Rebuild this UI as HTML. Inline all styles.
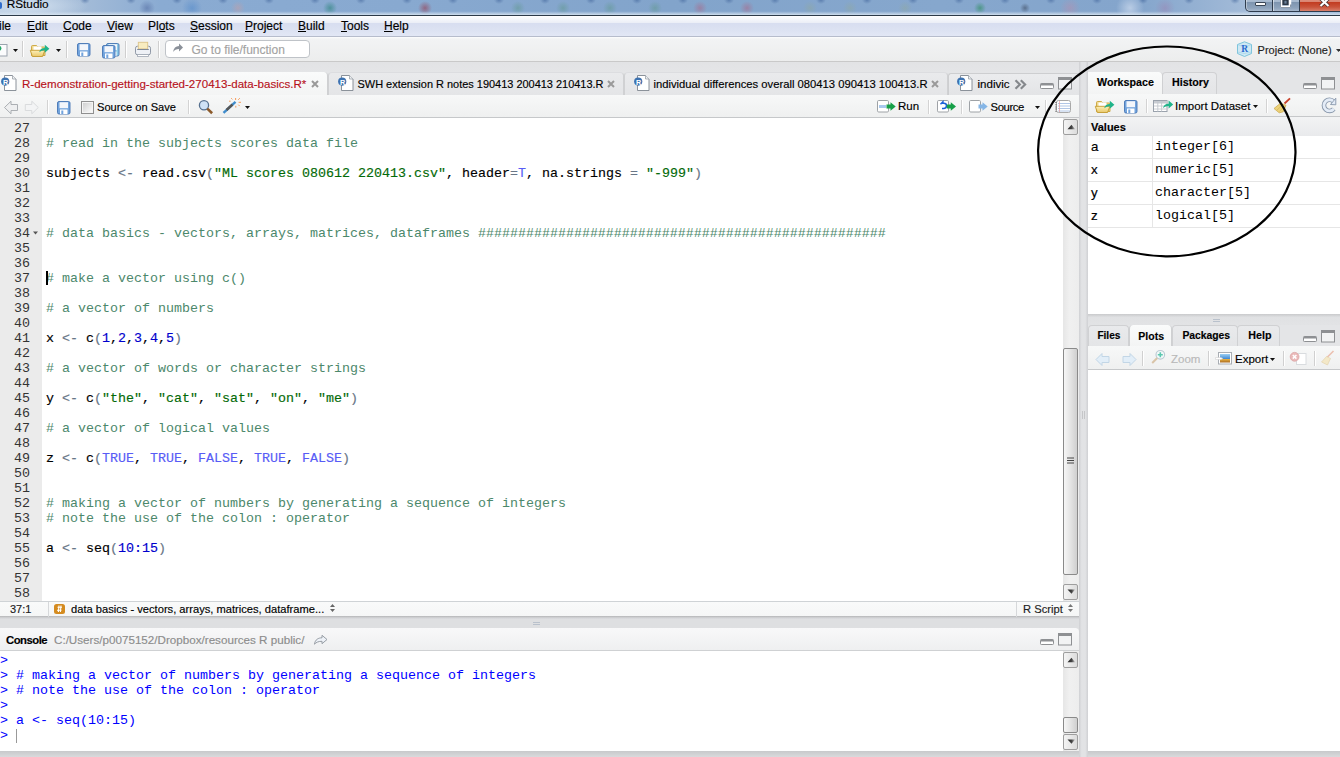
<!DOCTYPE html><html><head><meta charset="utf-8"><style>
*{margin:0;padding:0;box-sizing:border-box}
html,body{width:1340px;height:757px;overflow:hidden;background:#dedfe1;font-family:"Liberation Sans",sans-serif;font-size:12px;color:#000;position:relative}
.a{position:absolute}
.t{position:absolute;white-space:pre;-webkit-text-stroke:0.15px currentColor}
.u{text-decoration:underline;text-underline-offset:1px}
.code{position:absolute;font-family:"Liberation Mono",monospace;font-size:13.333px;line-height:15px;white-space:pre}
.cm{color:#4c886b;-webkit-text-stroke:0}.st{color:#036a07}.nu{color:#0000cd}.op{color:#687687}.la{color:#585cf6}
svg{position:absolute;overflow:visible}
</style></head><body>
<div class="a" style="left:0px;top:0px;width:1340px;height:15px;background:linear-gradient(rgba(255,255,255,0) 75%,rgba(215,228,240,.9) 100%),radial-gradient(ellipse 60px 14px at 28px 6px,rgba(215,228,242,.9),rgba(225,235,245,0)),radial-gradient(circle 8px at 147px 8px,rgba(80,105,160,.55),rgba(0,0,0,0)),radial-gradient(circle 10px at 192px 8px,rgba(70,130,200,.45),rgba(0,0,0,0)),radial-gradient(circle 7px at 238px 8px,rgba(190,160,170,.6),rgba(0,0,0,0)),radial-gradient(circle 7px at 330px 8px,rgba(40,130,120,.6),rgba(0,0,0,0)),radial-gradient(circle 7px at 425px 8px,rgba(150,60,80,.6),rgba(0,0,0,0)),radial-gradient(circle 7px at 518px 8px,rgba(90,150,130,.45),rgba(0,0,0,0)),radial-gradient(circle 7px at 563px 8px,rgba(90,150,130,.45),rgba(0,0,0,0)),radial-gradient(circle 7px at 610px 8px,rgba(90,150,130,.45),rgba(0,0,0,0)),radial-gradient(circle 7px at 655px 8px,rgba(90,150,130,.45),rgba(0,0,0,0)),radial-gradient(circle 7px at 700px 8px,rgba(180,90,120,.45),rgba(0,0,0,0)),radial-gradient(circle 7px at 747px 8px,rgba(180,90,120,.45),rgba(0,0,0,0)),radial-gradient(circle 7px at 810px 8px,rgba(150,170,140,.35),rgba(0,0,0,0)),radial-gradient(circle 7px at 850px 8px,rgba(150,170,140,.35),rgba(0,0,0,0)),radial-gradient(circle 7px at 905px 8px,rgba(150,170,140,.35),rgba(0,0,0,0)),radial-gradient(circle 6px at 980px 8px,rgba(40,140,90,.6),rgba(0,0,0,0)),radial-gradient(circle 5px at 1025px 8px,rgba(50,60,80,.5),rgba(0,0,0,0)),radial-gradient(circle 10px at 1070px 8px,rgba(190,140,170,.45),rgba(0,0,0,0)),radial-gradient(circle 14px at 1130px 8px,rgba(220,230,245,.6),rgba(0,0,0,0)),radial-gradient(circle 10px at 1165px 8px,rgba(160,120,170,.4),rgba(0,0,0,0)),radial-gradient(ellipse 5px 4px at 23px 0px,rgba(60,95,150,.55),rgba(60,95,150,0)) 108px 0/46px 15px repeat-x,linear-gradient(90deg,#b4c8de 0%,#a4bcd8 6%,#8aabd2 12%,#88a9d0 30%,#82a4cb 50%,#86a7cd 70%,#84a5cc 85%,#a3bbd8 93%,#94b0d2 100%)"></div>
<div class="a" style="left:0px;top:15px;width:1340px;height:1px;background:#2c3a48"></div>
<div class="t" style="left:6.7px;top:-1.19px;font-size:11.8px;line-height:11.8px;color:#000;">RStudio</div>
<div class="a" style="left:-3px;top:2px;width:4.5px;height:7px;background:#2f6ccc;border-radius:2px"></div>
<div class="a" style="left:1245px;top:-3px;width:28px;height:14.5px;background:linear-gradient(#b3c3d6 0px,#a5b8ce 5px,#7e95b0 5.5px,#8ea3bc 11px,#a7b8cc 14px);border:1px solid #2f3d4e;border-top:none;border-radius:0 0 0 5px;box-shadow:inset 1px 0 0 rgba(255,255,255,.4)"></div>
<div class="a" style="left:1273px;top:-3px;width:27px;height:14.5px;background:linear-gradient(#b3c3d6 0px,#a5b8ce 5px,#7e95b0 5.5px,#8ea3bc 11px,#a7b8cc 14px);border:1px solid #2f3d4e;border-top:none;border-left:none;box-shadow:inset 1px 0 0 rgba(255,255,255,.5)"></div>
<div class="a" style="left:1300px;top:-3px;width:42px;height:14.5px;background:linear-gradient(#e39a88 0px,#d98471 5px,#c23d22 5.5px,#c9533a 10px,#d8806b 14px);border:1px solid #2f3d4e;border-top:none;border-left:none"></div>
<div class="a" style="left:1254.5px;top:2.4px;width:11px;height:4px;background:#fbfbfb;border:1px solid #3a4656;border-radius:1px"></div>
<svg style="left:0;top:0" width="1340" height="757"><path d="M1283.5 -2 V3.5 h4 V-2" fill="none" stroke="#2e3a48" stroke-width="3.2"/><path d="M1281 -2 V7 h9 V-2" fill="none" stroke="#2e3a48" stroke-width="1"/><rect x="1281.5" y="-2" width="8" height="8.5" fill="none" stroke="#fff" stroke-width="1.6"/><rect x="1284" y="0.5" width="3" height="3.5" fill="#6a7f98" stroke="#2e3a48" stroke-width="0.8"/><path d="M1290.5 -1 V4.5" stroke="#fff" stroke-width="1.5"/><path d="M1320.5 -1.5 L1328.5 6 M1328.5 -1.5 L1320.5 6" stroke="#3a2a2a" stroke-width="3.6"/><path d="M1320.5 -1.5 L1328.5 6 M1328.5 -1.5 L1320.5 6" stroke="#fff" stroke-width="2.2"/></svg>
<div class="a" style="left:0px;top:16px;width:1340px;height:20px;background:linear-gradient(#ffffff 0px,#f5f7fb 3px,#eceff7 6.5px,#d8def0 7.5px,#dce2f2 14px,#e2e7f5 20px)"></div>
<div class="a" style="left:0px;top:36px;width:1340px;height:1px;background:#b6bccc"></div>
<div class="t" style="left:-1px;top:19.84px;font-size:12px;line-height:12px;color:#000;">ile</div>
<div class="t" style="left:27px;top:19.84px;font-size:12px;line-height:12px;color:#000;"><span class="u">E</span>dit</div>
<div class="t" style="left:63px;top:19.84px;font-size:12px;line-height:12px;color:#000;"><span class="u">C</span>ode</div>
<div class="t" style="left:107px;top:19.84px;font-size:12px;line-height:12px;color:#000;"><span class="u">V</span>iew</div>
<div class="t" style="left:148px;top:19.84px;font-size:12px;line-height:12px;color:#000;">Pl<span class="u">o</span>ts</div>
<div class="t" style="left:190px;top:19.84px;font-size:12px;line-height:12px;color:#000;"><span class="u">S</span>ession</div>
<div class="t" style="left:245px;top:19.84px;font-size:12px;line-height:12px;color:#000;"><span class="u">P</span>roject</div>
<div class="t" style="left:298px;top:19.84px;font-size:12px;line-height:12px;color:#000;"><span class="u">B</span>uild</div>
<div class="t" style="left:341px;top:19.84px;font-size:12px;line-height:12px;color:#000;"><span class="u">T</span>ools</div>
<div class="t" style="left:384px;top:19.84px;font-size:12px;line-height:12px;color:#000;"><span class="u">H</span>elp</div>
<div class="a" style="left:0px;top:37px;width:1340px;height:24px;background:linear-gradient(#fdfdfd 0px,#f2f3f4 2px,#eceded 24px)"></div>
<div class="a" style="left:0px;top:61px;width:1340px;height:1px;background:#c9c9c9"></div>
<div class="a" style="left:0px;top:62px;width:1340px;height:10px;background:linear-gradient(#e2e3e5,#e4e5e7)"></div>
<div class="a" style="left:165px;top:40px;width:145px;height:18px;background:#fff;border:1px solid #bfc3c8;border-radius:4px"></div>
<div class="t" style="left:191.5px;top:43.84px;font-size:12px;line-height:12px;color:#a3a3a3;">Go to file/function</div>
<div class="t" style="left:1257.6px;top:44.69px;font-size:11px;line-height:11px;color:#222;">Project: (None)</div>
<div class="a" style="left:0px;top:72px;width:1079px;height:23px;background:#e4e5e7"></div>
<div class="a" style="left:328px;top:72px;width:296px;height:23px;background:linear-gradient(#e9eaec,#e4e5e7);border-left:1px solid #d0d1d3;border-right:1px solid #d0d1d3;border-top:1px solid #dcdde0;border-top-left-radius:4px;border-top-right-radius:4px"></div>
<div class="a" style="left:624px;top:72px;width:324px;height:23px;background:linear-gradient(#e9eaec,#e4e5e7);border-left:1px solid #d0d1d3;border-right:1px solid #d0d1d3;border-top:1px solid #dcdde0;border-top-left-radius:4px;border-top-right-radius:4px"></div>
<div class="a" style="left:948px;top:73px;width:131px;height:22px;background:linear-gradient(#ebecee,#e3e4e6);border-left:1px solid #cdced0;border-top:1px solid #cdced0;border-top-left-radius:3px"></div>
<div class="a" style="left:0px;top:72px;width:328px;height:24px;background:linear-gradient(#fafbfb,#f3f4f4);border-right:1px solid #cfd0d2;border-top-right-radius:4px"></div>
<div class="t" style="left:22px;top:78.52px;font-size:11.55px;line-height:11.55px;color:#b7121c;">R-demonstration-getting-started-270413-data-basics.R*</div>
<div class="t" style="left:357.5px;top:79.02px;font-size:10.96px;line-height:10.96px;color:#000;">SWH extension R notes 190413 200413 210413.R</div>
<div class="t" style="left:653.5px;top:78.79px;font-size:11.24px;line-height:11.24px;color:#000;">individual differences overall 080413 090413 100413.R</div>
<div class="t" style="left:977.5px;top:78.52px;font-size:11.55px;line-height:11.55px;color:#000;">indivic</div>
<div class="a" style="left:0px;top:95px;width:1079px;height:22px;background:linear-gradient(#f7f8f8,#eff0f0)"></div>
<div class="a" style="left:0px;top:117px;width:1079px;height:1px;background:#c6c8ca"></div>
<div class="t" style="left:97px;top:101.60px;font-size:11.1px;line-height:11.1px;color:#000;">Source on Save</div>
<div class="t" style="left:898px;top:101.47px;font-size:11.5px;line-height:11.5px;color:#000;">Run</div>
<div class="t" style="left:990.5px;top:101.63px;font-size:11.3px;line-height:11.3px;color:#000;letter-spacing:-0.38px">Source</div>
<div class="a" style="left:0px;top:118px;width:1063px;height:483px;background:#fff"></div>
<div class="a" style="left:0px;top:118px;width:42px;height:483px;background:#ebebeb"></div>
<div class="a" style="left:1063px;top:118px;width:16px;height:483px;background:linear-gradient(90deg,#e6e6e6,#f0f0f0 40%,#ededed)"></div>
<div class="a" style="left:1063px;top:119px;width:15px;height:16px;background:linear-gradient(90deg,#f4f4f4,#dcdcdc);border:1px solid #9e9e9e;border-radius:2px"></div>
<div class="a" style="left:1063px;top:348px;width:15px;height:227px;background:linear-gradient(90deg,#f6f6f6,#e4e4e4 50%,#cfcfcf);border:1px solid #8a8a8a;border-radius:2px"></div>
<div class="a" style="left:1063px;top:584px;width:15px;height:16px;background:linear-gradient(90deg,#f4f4f4,#dcdcdc);border:1px solid #9e9e9e;border-radius:2px"></div>
<svg style="left:0;top:0" width="1340" height="757"><defs><linearGradient id="arr" x1="0" y1="0" x2="1" y2="0"><stop offset="0" stop-color="#222"/><stop offset="0.55" stop-color="#444"/><stop offset="1" stop-color="#c8c8c8"/></linearGradient></defs><path d="M1067.5 129.2 L1071.5 124.8 L1075.2 129.2 Z" fill="url(#arr)"/><path d="M1067.5 589.5 L1071.5 593.8 L1075.2 589.5 Z" fill="url(#arr)"/><path d="M1067 458h7M1067 460.5h7M1067 463h7" stroke="#444" stroke-width="1"/></svg>
<div class="code" style="left:0;top:121px;width:30px;text-align:right;color:#333">27
28
29
30
31
32
33
34
35
36
37
38
39
40
41
42
43
44
45
46
47
48
49
50
51
52
53
54
55
56
57
58</div>
<div class="code" style="left:46px;top:121px;-webkit-text-stroke:0.15px currentColor">
<span class="cm"># read in the subjects scores data file</span>

subjects <span class="op">&lt;-</span> read.csv<span class="op">(</span><span class="st">"ML scores 080612 220413.csv"</span>, header<span class="op">=</span><span class="la">T</span>, na.strings <span class="op">=</span> <span class="st">"-999"</span><span class="op">)</span>



<span class="cm"># data basics - vectors, arrays, matrices, dataframes ###################################################</span>


<span class="cm"># make a vector using c()</span>

<span class="cm"># a vector of numbers</span>

x <span class="op">&lt;-</span> c<span class="op">(</span><span class="nu">1</span>,<span class="nu">2</span>,<span class="nu">3</span>,<span class="nu">4</span>,<span class="nu">5</span><span class="op">)</span>

<span class="cm"># a vector of words or character strings</span>

y <span class="op">&lt;-</span> c<span class="op">(</span><span class="st">"the"</span>, <span class="st">"cat"</span>, <span class="st">"sat"</span>, <span class="st">"on"</span>, <span class="st">"me"</span><span class="op">)</span>

<span class="cm"># a vector of logical values</span>

z <span class="op">&lt;-</span> c<span class="op">(</span><span class="la">TRUE</span>, <span class="la">TRUE</span>, <span class="la">FALSE</span>, <span class="la">TRUE</span>, <span class="la">FALSE</span><span class="op">)</span>


<span class="cm"># making a vector of numbers by generating a sequence of integers</span>
<span class="cm"># note the use of the colon : operator</span>

a <span class="op">&lt;-</span> seq<span class="op">(</span><span class="nu">10:15</span><span class="op">)</span>
</div>
<div class="a" style="left:46px;top:271px;width:2px;height:14px;background:#000"></div>
<svg style="left:0;top:0" width="1340" height="757"><path d="M33 231.5 L38 231.5 L35.5 234.5 Z" fill="#555"/></svg>
<div class="a" style="left:0px;top:601px;width:1079px;height:16px;background:linear-gradient(#f9fafa,#f5f6f6);border-top:1px solid #cfd3d6"></div>
<div class="a" style="left:0px;top:616px;width:1079px;height:3px;background:linear-gradient(#b4b5b7,#d2d3d5 60%,#dcdde0)"></div>
<div class="a" style="left:48px;top:602px;width:1px;height:15px;background:#d6d8da"></div>
<div class="a" style="left:1016px;top:602px;width:1px;height:15px;background:#d6d8da"></div>
<div class="t" style="left:10px;top:603.89px;font-size:11px;line-height:11px;color:#222;">37:1</div>
<div class="t" style="left:71px;top:603.76px;font-size:11.15px;line-height:11.15px;color:#000;">data basics - vectors, arrays, matrices, dataframe...</div>
<div class="t" style="left:1023px;top:603.72px;font-size:11.2px;line-height:11.2px;color:#222;">R Script</div>
<div class="a" style="left:0px;top:628px;width:1079px;height:23px;background:linear-gradient(#f8f8f9,#eeeff0);border-top-right-radius:4px"></div>
<div class="a" style="left:0px;top:650px;width:1079px;height:1px;background:#cfd1d3"></div>
<div class="a" style="left:0px;top:651px;width:1079px;height:100px;background:#fff"></div>
<div class="a" style="left:0px;top:751px;width:1079px;height:6px;background:linear-gradient(#c8c9cb,#d9dadc)"></div>
<div class="t" style="left:6px;top:634.73px;font-size:11.3px;line-height:11.3px;color:#000;font-weight:bold;letter-spacing:-0.5px">Console</div>
<div class="t" style="left:54px;top:634.14px;font-size:11.65px;line-height:11.65px;color:#8c8c8c;">C:/Users/p0075152/Dropbox/resources R public/</div>
<div class="code" style="left:0;top:653px;color:#0000ff">&gt;
&gt; # making a vector of numbers by generating a sequence of integers
&gt; # note the use of the colon : operator
&gt;
&gt; a &lt;- seq(10:15)
&gt; </div>
<div class="a" style="left:16px;top:729px;width:1px;height:14px;background:#999"></div>
<div class="a" style="left:1063px;top:651px;width:16px;height:100px;background:linear-gradient(90deg,#e6e6e6,#f0f0f0 40%,#ededed)"></div>
<div class="a" style="left:1063px;top:652px;width:15px;height:16px;background:linear-gradient(90deg,#f4f4f4,#dcdcdc);border:1px solid #9e9e9e;border-radius:2px"></div>
<div class="a" style="left:1063px;top:717px;width:15px;height:16px;background:linear-gradient(90deg,#f6f6f6,#e4e4e4 50%,#cfcfcf);border:1px solid #8a8a8a;border-radius:2px"></div>
<div class="a" style="left:1063px;top:734px;width:15px;height:16px;background:linear-gradient(90deg,#f4f4f4,#dcdcdc);border:1px solid #9e9e9e;border-radius:2px"></div>
<svg style="left:0;top:0" width="1340" height="757"><path d="M1067.5 662.2 L1071.5 657.8 L1075.2 662.2 Z" fill="url(#arr)"/><path d="M1067.5 739.5 L1071.5 743.8 L1075.2 739.5 Z" fill="url(#arr)"/></svg>
<div class="a" style="left:1079px;top:62px;width:9px;height:695px;background:linear-gradient(90deg,#cfd0d3,#e2e3e5 30%,#e2e3e5 70%,#cfd0d3)"></div>
<div class="a" style="left:1088px;top:72px;width:252px;height:23px;background:#e4e5e7"></div>
<div class="a" style="left:1162px;top:72px;width:55px;height:22px;background:linear-gradient(#e9eaec,#e4e5e7);border:1px solid #d0d1d3;border-bottom:none;border-radius:4px 4px 0 0"></div>
<div class="a" style="left:1088px;top:72px;width:75px;height:23px;background:linear-gradient(#fafbfb,#f3f4f4);border-right:1px solid #cfd0d2;border-top-right-radius:4px"></div>
<div class="t" style="left:1097px;top:77.44px;font-size:10.7px;line-height:10.7px;color:#000;font-weight:bold;">Workspace</div>
<div class="t" style="left:1172px;top:77.44px;font-size:10.7px;line-height:10.7px;color:#000;font-weight:bold;">History</div>
<div class="a" style="left:1088px;top:94px;width:252px;height:23px;background:linear-gradient(#f7f8f8,#eff0f0)"></div>
<div class="a" style="left:1088px;top:116px;width:252px;height:1px;background:#c6c8ca"></div>
<div class="t" style="left:1175px;top:100.77px;font-size:11.5px;line-height:11.5px;color:#000;">Import Dataset</div>
<div class="a" style="left:1088px;top:117px;width:252px;height:197px;background:#fff"></div>
<div class="a" style="left:1088px;top:117px;width:252px;height:19px;background:linear-gradient(#f2f3f4,#e9eaec)"></div>
<div class="t" style="left:1091px;top:122.19px;font-size:11px;line-height:11px;color:#000;font-weight:bold;">Values</div>
<div class="a" style="left:1088px;top:158px;width:252px;height:1px;background:#e6e6e6"></div>
<div class="t" style="left:1091px;top:139.74px;font-size:13.3px;line-height:13.3px;color:#000;">a</div>
<div class="code" style="left:1155px;top:139px;color:#000">integer[6]</div>
<div class="a" style="left:1088px;top:181px;width:252px;height:1px;background:#e6e6e6"></div>
<div class="t" style="left:1091px;top:162.74px;font-size:13.3px;line-height:13.3px;color:#000;">x</div>
<div class="code" style="left:1155px;top:162px;color:#000">numeric[5]</div>
<div class="a" style="left:1088px;top:204px;width:252px;height:1px;background:#e6e6e6"></div>
<div class="t" style="left:1091px;top:185.74px;font-size:13.3px;line-height:13.3px;color:#000;">y</div>
<div class="code" style="left:1155px;top:185px;color:#000">character[5]</div>
<div class="a" style="left:1088px;top:227px;width:252px;height:1px;background:#e6e6e6"></div>
<div class="t" style="left:1091px;top:208.74px;font-size:13.3px;line-height:13.3px;color:#000;">z</div>
<div class="code" style="left:1155px;top:208px;color:#000">logical[5]</div>
<div class="a" style="left:1152px;top:136px;width:1px;height:92px;background:#e6e6e6"></div>
<div class="a" style="left:1088px;top:314px;width:252px;height:11px;background:linear-gradient(#c9cacc,#e0e1e3 30%,#e2e3e5)"></div>
<div class="a" style="left:1088px;top:325px;width:252px;height:21px;background:#e4e5e7"></div>
<div class="a" style="left:1088px;top:325px;width:41px;height:21px;background:linear-gradient(#e9eaec,#e4e5e7);border:1px solid #d0d1d3;border-bottom:none;border-radius:4px 4px 0 0"></div>
<div class="a" style="left:1172px;top:325px;width:66px;height:21px;background:linear-gradient(#e9eaec,#e4e5e7);border:1px solid #d0d1d3;border-bottom:none;border-radius:4px 4px 0 0"></div>
<div class="a" style="left:1237px;top:325px;width:43px;height:21px;background:linear-gradient(#e9eaec,#e4e5e7);border:1px solid #d0d1d3;border-bottom:none;border-radius:4px 4px 0 0"></div>
<div class="a" style="left:1129px;top:325px;width:43px;height:22px;background:linear-gradient(#fafbfb,#f3f4f4);border-left:1px solid #cfd0d2;border-right:1px solid #cfd0d2;border-radius:4px 4px 0 0"></div>
<div class="t" style="left:1097.4px;top:330.95px;font-size:10.1px;line-height:10.1px;color:#000;font-weight:bold;">Files</div>
<div class="t" style="left:1138.3px;top:330.61px;font-size:10.5px;line-height:10.5px;color:#000;font-weight:bold;">Plots</div>
<div class="t" style="left:1182.4px;top:330.74px;font-size:10.35px;line-height:10.35px;color:#000;font-weight:bold;">Packages</div>
<div class="t" style="left:1248.3px;top:330.44px;font-size:10.7px;line-height:10.7px;color:#000;font-weight:bold;">Help</div>
<div class="a" style="left:1088px;top:346px;width:252px;height:23px;background:linear-gradient(#f7f8f8,#eff0f0)"></div>
<div class="a" style="left:1088px;top:369px;width:252px;height:1px;background:#c6c8ca"></div>
<div class="t" style="left:1171px;top:354.27px;font-size:11.5px;line-height:11.5px;color:#b9b9b9;">Zoom</div>
<div class="t" style="left:1235px;top:354.27px;font-size:11.5px;line-height:11.5px;color:#000;">Export</div>
<div class="a" style="left:1088px;top:370px;width:252px;height:381px;background:#fff"></div>
<div class="a" style="left:1088px;top:751px;width:252px;height:6px;background:linear-gradient(#c8c9cb,#d9dadc)"></div>
<svg style="left:0;top:0" width="1340" height="757"><rect x="1040.5" y="83.5" width="13" height="5" rx="0.8" fill="#fff" stroke="#8e9093"/><rect x="1041" y="83.5" width="12" height="2" fill="#8e9093"/><rect x="1058.5" y="77.5" width="13" height="11.5" fill="#f2f3f4" stroke="#8e9093"/><rect x="1059" y="77.5" width="12" height="2.5" fill="#8e9093"/><rect x="1303.5" y="83.5" width="13" height="5" rx="0.8" fill="#fff" stroke="#8e9093"/><rect x="1304" y="83.5" width="12" height="2" fill="#8e9093"/><rect x="1321.5" y="77.5" width="13" height="11.5" fill="#f2f3f4" stroke="#8e9093"/><rect x="1322" y="77.5" width="12" height="2.5" fill="#8e9093"/><rect x="1303.5" y="336.5" width="13" height="5" rx="0.8" fill="#fff" stroke="#8e9093"/><rect x="1304" y="336.5" width="12" height="2" fill="#8e9093"/><rect x="1321.5" y="330.5" width="13" height="11.5" fill="#f2f3f4" stroke="#8e9093"/><rect x="1322" y="330.5" width="12" height="2.5" fill="#8e9093"/><rect x="1040.5" y="639.5" width="13" height="5" rx="0.8" fill="#fff" stroke="#8e9093"/><rect x="1041" y="639.5" width="12" height="2" fill="#8e9093"/><rect x="1058.5" y="633.5" width="13" height="11.5" fill="#f2f3f4" stroke="#8e9093"/><rect x="1059" y="633.5" width="12" height="2.5" fill="#8e9093"/><path d="M4.5 75.5 h8 l3.5 3.5 v11.5 h-11.5 z" fill="#fff" stroke="#7f8790" stroke-width="0.9"/><path d="M12.5 75.5 v3.5 h3.5" fill="#eef0f2" stroke="#9aa1a8" stroke-width="0.8"/><circle cx="5.2" cy="81.6" r="4.1" fill="#3d72b0"/><text x="2.9" y="84.7" font-family="Liberation Sans" font-weight="bold" font-size="7.2" fill="#fff">R</text><path d="M341.5 75.5 h8 l3.5 3.5 v11.5 h-11.5 z" fill="#fff" stroke="#7f8790" stroke-width="0.9"/><path d="M349.5 75.5 v3.5 h3.5" fill="#eef0f2" stroke="#9aa1a8" stroke-width="0.8"/><circle cx="342.2" cy="81.6" r="4.1" fill="#3d72b0"/><text x="339.9" y="84.7" font-family="Liberation Sans" font-weight="bold" font-size="7.2" fill="#fff">R</text><path d="M637.5 75.5 h8 l3.5 3.5 v11.5 h-11.5 z" fill="#fff" stroke="#7f8790" stroke-width="0.9"/><path d="M645.5 75.5 v3.5 h3.5" fill="#eef0f2" stroke="#9aa1a8" stroke-width="0.8"/><circle cx="638.2" cy="81.6" r="4.1" fill="#3d72b0"/><text x="635.9" y="84.7" font-family="Liberation Sans" font-weight="bold" font-size="7.2" fill="#fff">R</text><path d="M960.5 75.5 h8 l3.5 3.5 v11.5 h-11.5 z" fill="#fff" stroke="#7f8790" stroke-width="0.9"/><path d="M968.5 75.5 v3.5 h3.5" fill="#eef0f2" stroke="#9aa1a8" stroke-width="0.8"/><circle cx="961.2" cy="81.6" r="4.1" fill="#3d72b0"/><text x="958.9" y="84.7" font-family="Liberation Sans" font-weight="bold" font-size="7.2" fill="#fff">R</text><path d="M312 81 l6 6 M318 81 l-6 6" stroke="#9a9a9a" stroke-width="2"/><path d="M608 81 l6 6 M614 81 l-6 6" stroke="#9a9a9a" stroke-width="2"/><path d="M932 81 l6 6 M938 81 l-6 6" stroke="#9a9a9a" stroke-width="2"/><path d="M1015.5 80.3 l4.3 4.2 l-4.3 4.2 M1020.8 80.3 l4.3 4.2 l-4.3 4.2" fill="none" stroke="#85888c" stroke-width="2.2"/><rect x="-2" y="44.5" width="9" height="11.5" fill="#fbfcfd" stroke="#9aa3ad"/><circle cx="-1.2" cy="48.3" r="2.6" fill="#25a86a"/><path d="M13 49 h5 l-2.5 3 z" fill="#111"/><path d="M56 49 h5 l-2.5 3 z" fill="#111"/><path d="M22.5 41 V57" stroke="#cfcfcf"/><path d="M23.5 41 V57" stroke="#fff"/><path d="M66.5 41 V58" stroke="#cfcfcf"/><path d="M67.5 41 V58" stroke="#fff"/><path d="M125.5 41 V58" stroke="#cfcfcf"/><path d="M126.5 41 V58" stroke="#fff"/><path d="M158.5 41 V58" stroke="#cfcfcf"/><path d="M159.5 41 V58" stroke="#fff"/><defs><linearGradient id="fg" x1="0" y1="0" x2="0" y2="1"><stop offset="0" stop-color="#fdf0b8"/><stop offset="1" stop-color="#e9c86a"/></linearGradient></defs><path d="M31.5 55.5 V46.5 q0 -1 1 -1 h4 l1.5 1.5 h6 q1 0 1 1 v7.5 z" fill="#f1d98a" stroke="#c9a43c" stroke-width="0.9"/><rect x="33.5" y="46.5" width="8" height="6" fill="#fff"/><path d="M30.3 50.3 H44.8 L42.6 56.5 H32.3 Z" fill="url(#fg)" stroke="#c39a2e" stroke-width="0.9"/><path d="M39.2 52.2 q1.2 -4.2 5.6 -4.2 v-3.2 l4.6 4 l-4.6 4 v-2.6 q-3.4 0 -5.6 2z" fill="#20b48a"/><path d="M1096.5 111.5 V102.5 q0 -1 1 -1 h4 l1.5 1.5 h6 q1 0 1 1 v7.5 z" fill="#f1d98a" stroke="#c9a43c" stroke-width="0.9"/><rect x="1098.5" y="102.5" width="8" height="6" fill="#fff"/><path d="M1095.3 106.3 H1109.8 L1107.6 112.5 H1097.3 Z" fill="url(#fg)" stroke="#c39a2e" stroke-width="0.9"/><path d="M1104.2 108.2 q1.2 -4.2 5.6 -4.2 v-3.2 l4.6 4 l-4.6 4 v-2.6 q-3.4 0 -5.6 2z" fill="#20b48a"/><rect x="77.5" y="43.5" width="12.5" height="12.5" rx="1.5" fill="#72a4dd" stroke="#4675b3" stroke-width="0.9"/><rect x="79.5" y="44.2" width="8.5" height="6" fill="#f3f6fb"/><rect x="80" y="51.5" width="7.5" height="4.5" fill="#fff"/><rect x="81.3" y="52.5" width="2" height="3.5" fill="#72a4dd"/><rect x="57.5" y="101.5" width="12.5" height="12.5" rx="1.5" fill="#72a4dd" stroke="#4675b3" stroke-width="0.9"/><rect x="59.5" y="102.2" width="8.5" height="6" fill="#f3f6fb"/><rect x="60" y="109.5" width="7.5" height="4.5" fill="#fff"/><rect x="61.3" y="110.5" width="2" height="3.5" fill="#72a4dd"/><rect x="1124.5" y="100.5" width="12.5" height="12.5" rx="1.5" fill="#72a4dd" stroke="#4675b3" stroke-width="0.9"/><rect x="1126.5" y="101.2" width="8.5" height="6" fill="#f3f6fb"/><rect x="1127" y="108.5" width="7.5" height="4.5" fill="#fff"/><rect x="1128.3" y="109.5" width="2" height="3.5" fill="#72a4dd"/><rect x="106.5" y="43.5" width="12.5" height="12.5" rx="1.5" fill="#8ccbe8" stroke="#4675b3" stroke-width="0.9"/><rect x="108.5" y="44.2" width="8.5" height="6" fill="#f3f6fb"/><rect x="109" y="51.5" width="7.5" height="4.5" fill="#fff"/><rect x="110.3" y="52.5" width="2" height="3.5" fill="#8ccbe8"/><rect x="102.5" y="45.5" width="12.5" height="12.5" rx="1.5" fill="#72a4dd" stroke="#4675b3" stroke-width="0.9"/><rect x="104.5" y="46.2" width="8.5" height="6" fill="#f3f6fb"/><rect x="105" y="53.5" width="7.5" height="4.5" fill="#fff"/><rect x="106.3" y="54.5" width="2" height="3.5" fill="#72a4dd"/><rect x="135.5" y="46.2" width="15" height="8.6" rx="2" fill="#eef1f6" stroke="#8f98a6"/><rect x="138.3" y="42.3" width="9.4" height="6.6" fill="#f8ecc0" stroke="#dcc48a" stroke-width="0.9"/><path d="M137.2 49.5 h11.6" stroke="#7f8896" stroke-width="1"/><rect x="137.5" y="54.6" width="11" height="1.8" fill="#fff" stroke="#a0a8b4" stroke-width="0.8"/><path d="M173 52 q1 -6 6 -6 v-2.5 l4 4 l-4 4 v-2.5 q-4 0 -6 3z" fill="#8a9099"/><path d="M1244.5 41.8 L1251.5 44.5 V53.5 L1244.5 56.5 L1237.5 53.5 V44.5 Z" fill="#cfe8f4" stroke="#72bfd8" stroke-width="0.9"/><path d="M1237.5 44.5 L1244.5 47.2 L1251.5 44.5 M1237.5 52 Q1244.5 55 1251.5 52" fill="none" stroke="#9ed2e6" stroke-width="0.7"/><text x="1241.2" y="51.5" font-family="Liberation Serif" font-weight="bold" font-size="9.5" fill="#2a6ad0">R</text><path d="M1336 49 h5 l-2.5 3 z" fill="#333"/><path d="M4.5 107.5 l6.5 -6.3 v3.3 h6.5 v6 h-6.5 v3.3 z" fill="#eeeff0" stroke="#a3a7ab" stroke-width="0.9"/><path d="M38.3 107.5 l-6.5 -6.3 v3.3 h-6.5 v6 h6.5 v3.3 z" fill="#f3f4f5" stroke="#d6d8da" stroke-width="0.9"/><path d="M47.5 100 V114" stroke="#d3d3d3"/><path d="M48.5 100 V114" stroke="#fff"/><path d="M188.5 100 V114" stroke="#d3d3d3"/><path d="M189.5 100 V114" stroke="#fff"/><path d="M928.5 100 V114" stroke="#d3d3d3"/><path d="M929.5 100 V114" stroke="#fff"/><path d="M961.5 100 V114" stroke="#d3d3d3"/><path d="M962.5 100 V114" stroke="#fff"/><path d="M1045.5 100 V114" stroke="#d3d3d3"/><path d="M1046.5 100 V114" stroke="#fff"/><rect x="81.5" y="101.5" width="12" height="12" fill="#f4f4f4" stroke="#8f8f8f"/><rect x="83" y="103" width="9" height="9" fill="url(#cbg)"/><defs><linearGradient id="cbg" x1="0" y1="0" x2="1" y2="1"><stop offset="0" stop-color="#d0d0d0"/><stop offset="1" stop-color="#fafafa"/></linearGradient></defs><circle cx="204" cy="105.3" r="4.6" fill="#cfe2f6" stroke="#56708f" stroke-width="1.3"/><path d="M207.3 108.6 l4.8 4.6" stroke="#8b5a2b" stroke-width="2.6"/><path d="M223.5 112.8 L235.5 101.8" stroke="#3f8ccc" stroke-width="2.4"/><path d="M226.5 110 L232.5 104.5" stroke="#555" stroke-width="2.4"/><path d="M235.6 98 v2 M238.2 99.8 l1.6 -1.6 M238.6 102.3 h2.4 M238.3 104.7 l1.4 1.4 M235.8 105.8 v1.8 M229 101.2 h1.6 M231.2 98.2 l1.2 1.2" stroke="#f59a5a" stroke-width="1"/><path d="M245 106 h5 l-2.5 3 z" fill="#111"/><rect x="877.5" y="100.5" width="11" height="11.5" rx="1.2" fill="#fff" stroke="#9ea2a6"/><rect x="879" y="105" width="7" height="3" fill="#a9c9ef"/><path d="M886.5 104.6 h4 V102.2 L895.7 106.5 L890.5 110.8 V108.4 h-4 Z" fill="#17a048"/><rect x="937.5" y="100.5" width="11" height="11.5" rx="1.2" fill="#fff" stroke="#9ea2a6"/><path d="M940.5 104.2 l2.4 -2.4 v1.5 h1 q2.6 0 2.6 2.5 q0 2.6 -3 2.6 h-1.5" fill="none" stroke="#1a5fd8" stroke-width="1.5"/><path d="M946.8 104.6 h4 V102.2 L956.0 106.5 L950.8 110.8 V108.4 h-4 Z" fill="#17a048"/><rect x="969.5" y="100.5" width="11" height="11.5" rx="1.2" fill="#fff" stroke="#9ea2a6"/><path d="M978.5 104.6 h4 V102.2 L987.7 106.5 L982.5 110.8 V108.4 h-4 Z" fill="#86b6e6"/><path d="M1035 106 h5 l-2.5 3 z" fill="#111"/><rect x="1056.5" y="100.5" width="14" height="12" rx="2" fill="#fff" stroke="#a9a9a9"/><path d="M1058 103.5 h12 M1058 106 h12 M1058 108.5 h12 M1058 111 h12" stroke="#9db8e0" stroke-width="0.8"/><path d="M1059.5 101 v11" stroke="#e89a9a" stroke-width="0.7"/><path d="M1056 102 v10" stroke="#555" stroke-width="1.2" stroke-dasharray="1 1.2"/><rect x="54" y="604" width="11" height="10" rx="2.5" fill="#d48b20"/><path d="M57.5 607.3 h4.5 M57 610.3 h4.5 M59 605.5 l-0.6 6.5 M61 605.5 l-0.6 6.5" stroke="#fff" stroke-width="1.1"/><path d="M330 607 l2.5 -3 l2.5 3 z M330 609 l2.5 3 l2.5 -3 z" fill="#666"/><path d="M1068 607 l2.5 -3 l2.5 3 z M1068 609 l2.5 3 l2.5 -3 z" fill="#777"/><path d="M314.5 644.2 C315 639.5 318.5 637.8 322 637.8 V635.3 L327 639.5 L322 643.7 V641.3 C318.5 641.3 316.2 642.2 314.5 644.2 Z" fill="#eef2f8" stroke="#8d949c" stroke-width="0.9" stroke-linejoin="round"/><path d="M533 622.5 h7 M533 624.5 h7" stroke="#b9c1cc"/><path d="M1213 319.5 h7 M1213 321.5 h7" stroke="#b9c1cc"/><path d="M1082.5 411 v8 M1084.5 411 v8" stroke="#c5c6c8"/><path d="M1146.5 99 V113" stroke="#d3d3d3"/><path d="M1147.5 99 V113" stroke="#fff"/><path d="M1266.5 99 V113" stroke="#d3d3d3"/><path d="M1267.5 99 V113" stroke="#fff"/><rect x="1153.5" y="100.5" width="13.5" height="11" fill="#fff" stroke="#9aa2ac"/><rect x="1154" y="101" width="12.5" height="2.5" fill="#c8ccd2"/><path d="M1154 106 h12.5 M1154 109 h12.5 M1157.8 101 v10.5 M1161.6 101 v10.5" stroke="#c4c8ce" stroke-width="0.9"/><path d="M1163 108 q1.2 -4.2 5.6 -4.2 v-3.2 l4.6 4 l-4.6 4 v-2.6 q-3.4 0 -5.6 2z" fill="#20b48a"/><path d="M1253 105 h5 l-2.5 3 z" fill="#111"/><path d="M1284.5 103.5 L1290 98.3" stroke="#c8402a" stroke-width="1.8"/><path d="M1274 108.5 L1280.5 103.2 L1286 105.2 L1283.2 111.8 L1279.2 112.8 Z" fill="#ecd27a" stroke="#c9a545" stroke-width="0.7"/><path d="M1277 110 l5 -4.5 M1279.5 111.5 l4.5 -5" stroke="#cfae50" stroke-width="0.6"/><path d="M1333.6 101.5 A5.6 5.6 0 1 0 1333.8 109" fill="none" stroke="#8796aa" stroke-width="4.6"/><path d="M1333.6 101.5 A5.6 5.6 0 1 0 1333.8 109" fill="none" stroke="#e4ecf7" stroke-width="2.8"/><path d="M1330.5 104.5 L1335.8 98.2 L1335.8 104.8 Z" fill="#e4ecf7" stroke="#8796aa" stroke-width="0.9"/><path d="M1096 359.5 l6 -6 v3 h7 v6 h-7 v3 z" fill="#e2eef8" stroke="#c2d6e6"/><path d="M1136 359.5 l-6 -6 v3 h-7 v6 h7 v3 z" fill="#e2eef8" stroke="#c2d6e6"/><path d="M1142.5 351 V366" stroke="#d0d0d0"/><path d="M1143.5 351 V366" stroke="#fff"/><path d="M1208.5 351 V366" stroke="#d0d0d0"/><path d="M1209.5 351 V366" stroke="#fff"/><path d="M1283.5 351 V366" stroke="#d0d0d0"/><path d="M1284.5 351 V366" stroke="#fff"/><path d="M1314.5 351 V366" stroke="#d0d0d0"/><path d="M1315.5 351 V366" stroke="#fff"/><circle cx="1160.3" cy="354.8" r="4.3" fill="#f2f8f8" stroke="#b9c9d2" stroke-width="1.1"/><path d="M1157.8 354.8 h5 M1160.3 352.3 v5" stroke="#5cc8b0" stroke-width="1.6"/><path d="M1157.2 358 l-5 5" stroke="#d9c4a8" stroke-width="2"/><defs><linearGradient id="sky" x1="0" y1="0" x2="0" y2="1"><stop offset="0" stop-color="#9cd0f4"/><stop offset=".6" stop-color="#3d86d0"/><stop offset=".62" stop-color="#e8b040"/><stop offset="1" stop-color="#a86a20"/></linearGradient></defs><rect x="1218.5" y="352.5" width="13" height="11.5" fill="#fff" stroke="#a8adb3"/><rect x="1220" y="354" width="10" height="8.5" fill="url(#sky)"/><path d="M1215.5 357.5 h5.5 l2 1 -2 1 h-5.5z" fill="#fff" stroke="#c8c8c8" stroke-width="0.5"/><path d="M1270 358 h5 l-2.5 3 z" fill="#111"/><rect x="1296.5" y="353.5" width="9.5" height="11" fill="#fff" stroke="#d9dcdf"/><circle cx="1294.6" cy="356.8" r="4.4" fill="#eab9b9" stroke="#dba4a4" stroke-width="0.8"/><path d="M1292.8 355 l3.6 3.6 M1296.4 355 l-3.6 3.6" stroke="#fff" stroke-width="1.5"/><path d="M1327 357.5 l6.5 -6.5" stroke="#ecc0b0" stroke-width="1.6"/><path d="M1321.5 362 L1326.5 356.5 L1330.5 358.5 L1327.5 365 Z" fill="#f3e8c8" stroke="#e0d0a8" stroke-width="0.6"/></svg>
<svg style="left:0;top:0" width="1340" height="757"><ellipse cx="1166.8" cy="151.4" rx="128.7" ry="104.9" transform="rotate(0.6 1166.8 151.4)" fill="none" stroke="#000" stroke-width="2.2"/></svg>
</body></html>
